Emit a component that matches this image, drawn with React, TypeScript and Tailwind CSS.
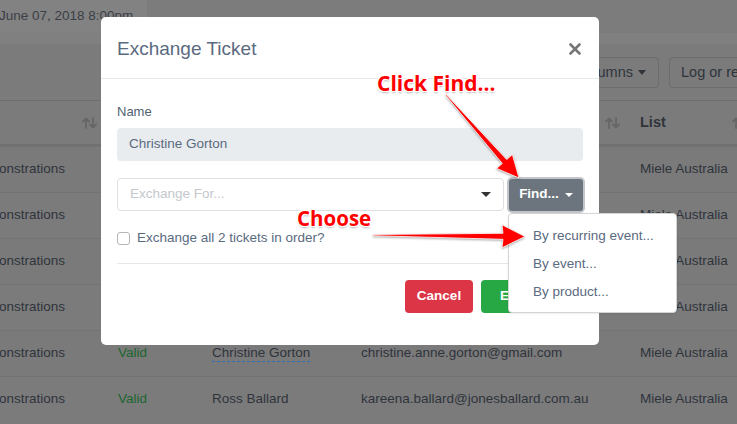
import React from "react";

function SortIcon() {
  return (
    <svg width="15" height="12" viewBox="0 0 15 12" fill="none" stroke="#666" strokeWidth="1.8" strokeLinecap="round" strokeLinejoin="round">
      <path d="M4 11V1.5M1 4.5l3-3 3 3" />
      <path d="M11 1v9.5M8 7.5l3 3 3-3" />
    </svg>
  );
}

const rows = [
  { c1: "onstrations", status: "Valid", name: "Kate Williams", email: "kate.williams@gmail.com", list: "Miele Australia", link: false },
  { c1: "onstrations", status: "Valid", name: "John Smith", email: "john.smith@outlook.com", list: "Miele Australia", link: false },
  { c1: "onstrations", status: "Valid", name: "Sarah Jones", email: "sarah.jones@gmail.com", list: "Miele Australia", link: false },
  { c1: "onstrations", status: "Valid", name: "Peter Brown", email: "peter.brown@bigpond.com", list: "Miele Australia", link: false },
  { c1: "onstrations", status: "Valid", name: "Christine Gorton", email: "christine.anne.gorton@gmail.com", list: "Miele Australia", link: true },
  { c1: "onstrations", status: "Valid", name: "Ross Ballard", email: "kareena.ballard@jonesballard.com.au", list: "Miele Australia", link: false },
];

const shadow =
  "[text-shadow:0_0_2px_#fff,0_0_2px_#fff,1px_1px_0_#fff,-1px_-1px_0_#fff,1px_-1px_0_#fff,-1px_1px_0_#fff,0_2px_2px_rgba(0,0,0,0.3)]";

export default function App() {
  return (
    <div className="relative w-[737px] h-[424px] overflow-hidden bg-[#7b7b7b] font-['Liberation_Sans',Arial,sans-serif] text-[13.5px] text-[#2f343b]">
      {/* background page */}
      <div className="flex flex-col">
        <div className="flex h-[33px]">
          <div className="w-[147px] bg-[#828282] flex items-center whitespace-nowrap overflow-hidden">
            <span className="ml-[-1px] text-[13.5px] text-[#3a3f46]">June 07, 2018 8:00pm</span>
          </div>
          <div className="flex-1 bg-[#7c7c7c]" />
        </div>
        <div className="h-[11px] bg-[#808080]" />
        <div className="h-[56px] flex items-start pt-[13px] gap-[10px] pl-[459px] whitespace-nowrap">
          <div className="w-[200px] h-[31px] shrink-0 border border-[#6c6c6c] rounded-[4px] flex items-center justify-end pr-[12px] gap-[5px] text-[14.5px] text-[#2f343b]">
            Show Columns
            <span className="w-0 h-0 border-l-[4px] border-r-[4px] border-t-[5px] border-l-transparent border-r-transparent border-t-[#2f343b]" />
          </div>
          <div className="w-[120px] h-[31px] shrink-0 border border-[#6c6c6c] rounded-[4px] flex items-center pl-[11px] text-[14.5px] text-[#2f343b]">
            Log or report
          </div>
        </div>
        {/* table */}
        <div className="border-t border-[#6f6f6f]">
          <div className="h-[45px] flex items-center border-b-2 border-[#707070] whitespace-nowrap">
            <div className="w-[106px] shrink-0 flex justify-end pr-[9px]"><SortIcon /></div>
            <div className="w-[94px] shrink-0" />
            <div className="w-[149px] shrink-0" />
            <div className="w-[279px] shrink-0 flex justify-end pr-[8px]"><SortIcon /></div>
            <div className="w-[109px] shrink-0 flex items-center justify-between pl-[12px]">
              <span className="font-bold text-[14.5px] text-[#2f343b]">List</span>
              <span className="mr-[-10px]"><SortIcon /></span>
            </div>
          </div>
          {rows.map((r, i) => (
            <div key={i} className={`h-[46px] flex items-center whitespace-nowrap border-t border-[#737373] ${i % 2 === 0 ? "bg-[#7a7a7a]" : "bg-[#7b7b7b]"}`}>
              <div className="w-[106px] shrink-0 overflow-hidden"><span className="ml-[-1px]">{r.c1}</span></div>
              <div className="w-[94px] shrink-0 pl-[12px] text-[#1c6630]">{r.status}</div>
              <div className="w-[149px] shrink-0 pl-[12px]">
                {r.link ? (
                  <span className="border-b border-dashed border-[#2f6db5] pb-[1px]">{r.name}</span>
                ) : (
                  r.name
                )}
              </div>
              <div className="w-[279px] shrink-0 pl-[12px]">{r.email}</div>
              <div className="w-[109px] shrink-0 pl-[12px]">{r.list}</div>
            </div>
          ))}
        </div>
      </div>

      {/* modal */}
      <div className="absolute left-[101px] top-[17px] w-[498px] h-[328px] bg-white rounded-[5px] flex flex-col text-[#5a6a80]">
        <div className="h-[62px] shrink-0 border-b border-[#e6e9ec] flex items-center justify-between px-4 pt-[3px]">
          <span className="text-[19px] text-[#5a6a80]">Exchange Ticket</span>
          <svg width="12" height="12" viewBox="0 0 12 12" className="mr-[2px]" stroke="#777" strokeWidth="2.6" strokeLinecap="round">
            <path d="M1.5 1.5l9 9M10.5 1.5l-9 9" />
          </svg>
        </div>
        <div className="px-4 pt-[23px] flex flex-col">
          <div className="h-[20px] leading-[20px] mb-[6px] text-[13px] text-[#525f72]">Name</div>
          <div className="h-[33px] rounded-[4px] bg-[#e9ecef] flex items-center px-3 text-[13.5px] text-[#5a6a80]">Christine Gorton</div>
          <div className="mt-[17px] flex items-center">
            <div className="w-[387px] h-[33px] border border-[#dcdfe3] rounded-[4px] flex items-center justify-between pl-3 pr-[12px] text-[13.5px] text-[#c3c8cd]">
              Exchange For...
              <span className="w-0 h-0 border-l-[5px] border-r-[5px] border-t-[5px] border-l-transparent border-r-transparent border-t-[#333]" />
            </div>
            <div className="ml-[5px] w-[74px] h-[32px] rounded-[3px] bg-[#6c757d] ring-2 ring-[#c2c6ca] flex items-center justify-center gap-[6px] text-white font-bold text-[13.5px]">
              Find...
              <span className="w-0 h-0 border-l-[4px] border-r-[4px] border-t-[4px] border-l-transparent border-r-transparent border-t-white" />
            </div>
          </div>
          <div className="mt-[17px] h-[20px] flex items-center">
            <span className="w-[13px] h-[13px] border border-[#b5b5b5] rounded-[3px] bg-white" />
            <span className="ml-[7px] text-[13.5px] text-[#5a6a80]">Exchange all 2 tickets in order?</span>
          </div>
          <div className="mt-[15px] h-px bg-[#e5e7ea]" />
          <div className="pt-[16px] flex justify-end gap-[8px]">
            <div className="w-[68px] h-[33px] rounded-[4px] bg-[#dc3545] text-white font-bold text-[13.5px] flex items-center justify-center">Cancel</div>
            <div className="w-[102px] h-[33px] rounded-[4px] bg-[#28a745] text-white font-bold text-[13.5px] flex items-center justify-center">Exchange</div>
          </div>
        </div>
      </div>

      {/* dropdown menu */}
      <div className="absolute left-[508px] top-[213px] w-[169px] h-[100px] bg-white border border-[#d4d4d4] rounded-[4px] py-2 shadow-[0_1px_2px_rgba(0,0,0,0.08)]">
        {["By recurring event...", "By event...", "By product..."].map((t) => (
          <div key={t} className="h-[28px] flex items-center px-6 text-[13.5px] text-[#5a6a80] whitespace-nowrap">{t}</div>
        ))}
      </div>

      {/* annotation arrows */}
      <svg className="absolute inset-0 pointer-events-none drop-shadow-[0_1px_1px_rgba(0,0,0,0.35)]" width="737" height="424" viewBox="0 0 737 424">
        <polygon
          points="445.6,95.3 502.3,163.5 496.6,168.4 519,178 512.4,154.6 506.7,159.5 446.4,94.7"
          fill="#ff0000"
          stroke="#ffffff"
          strokeWidth="0.8"
          strokeLinejoin="round"
        />
        <polygon
          points="373,234.5 503,233.3 502,224.8 525,236.5 502,247.8 503,239.3 373,235.7"
          fill="#ff0000"
          stroke="#ffffff"
          strokeWidth="0.8"
          strokeLinejoin="round"
        />
      </svg>

      {/* annotation text */}
      <div className={`absolute left-[377px] top-[69px] font-['Open_Sans',sans-serif] font-bold text-[21px] leading-[28px] text-[#ff0000] whitespace-nowrap ${shadow}`}>
        Click Find...
      </div>
      <div className={`absolute left-[297px] top-[204px] font-['Open_Sans',sans-serif] font-bold text-[20.5px] leading-[28px] text-[#ff0000] whitespace-nowrap ${shadow}`}>
        Choose
      </div>
    </div>
  );
}
